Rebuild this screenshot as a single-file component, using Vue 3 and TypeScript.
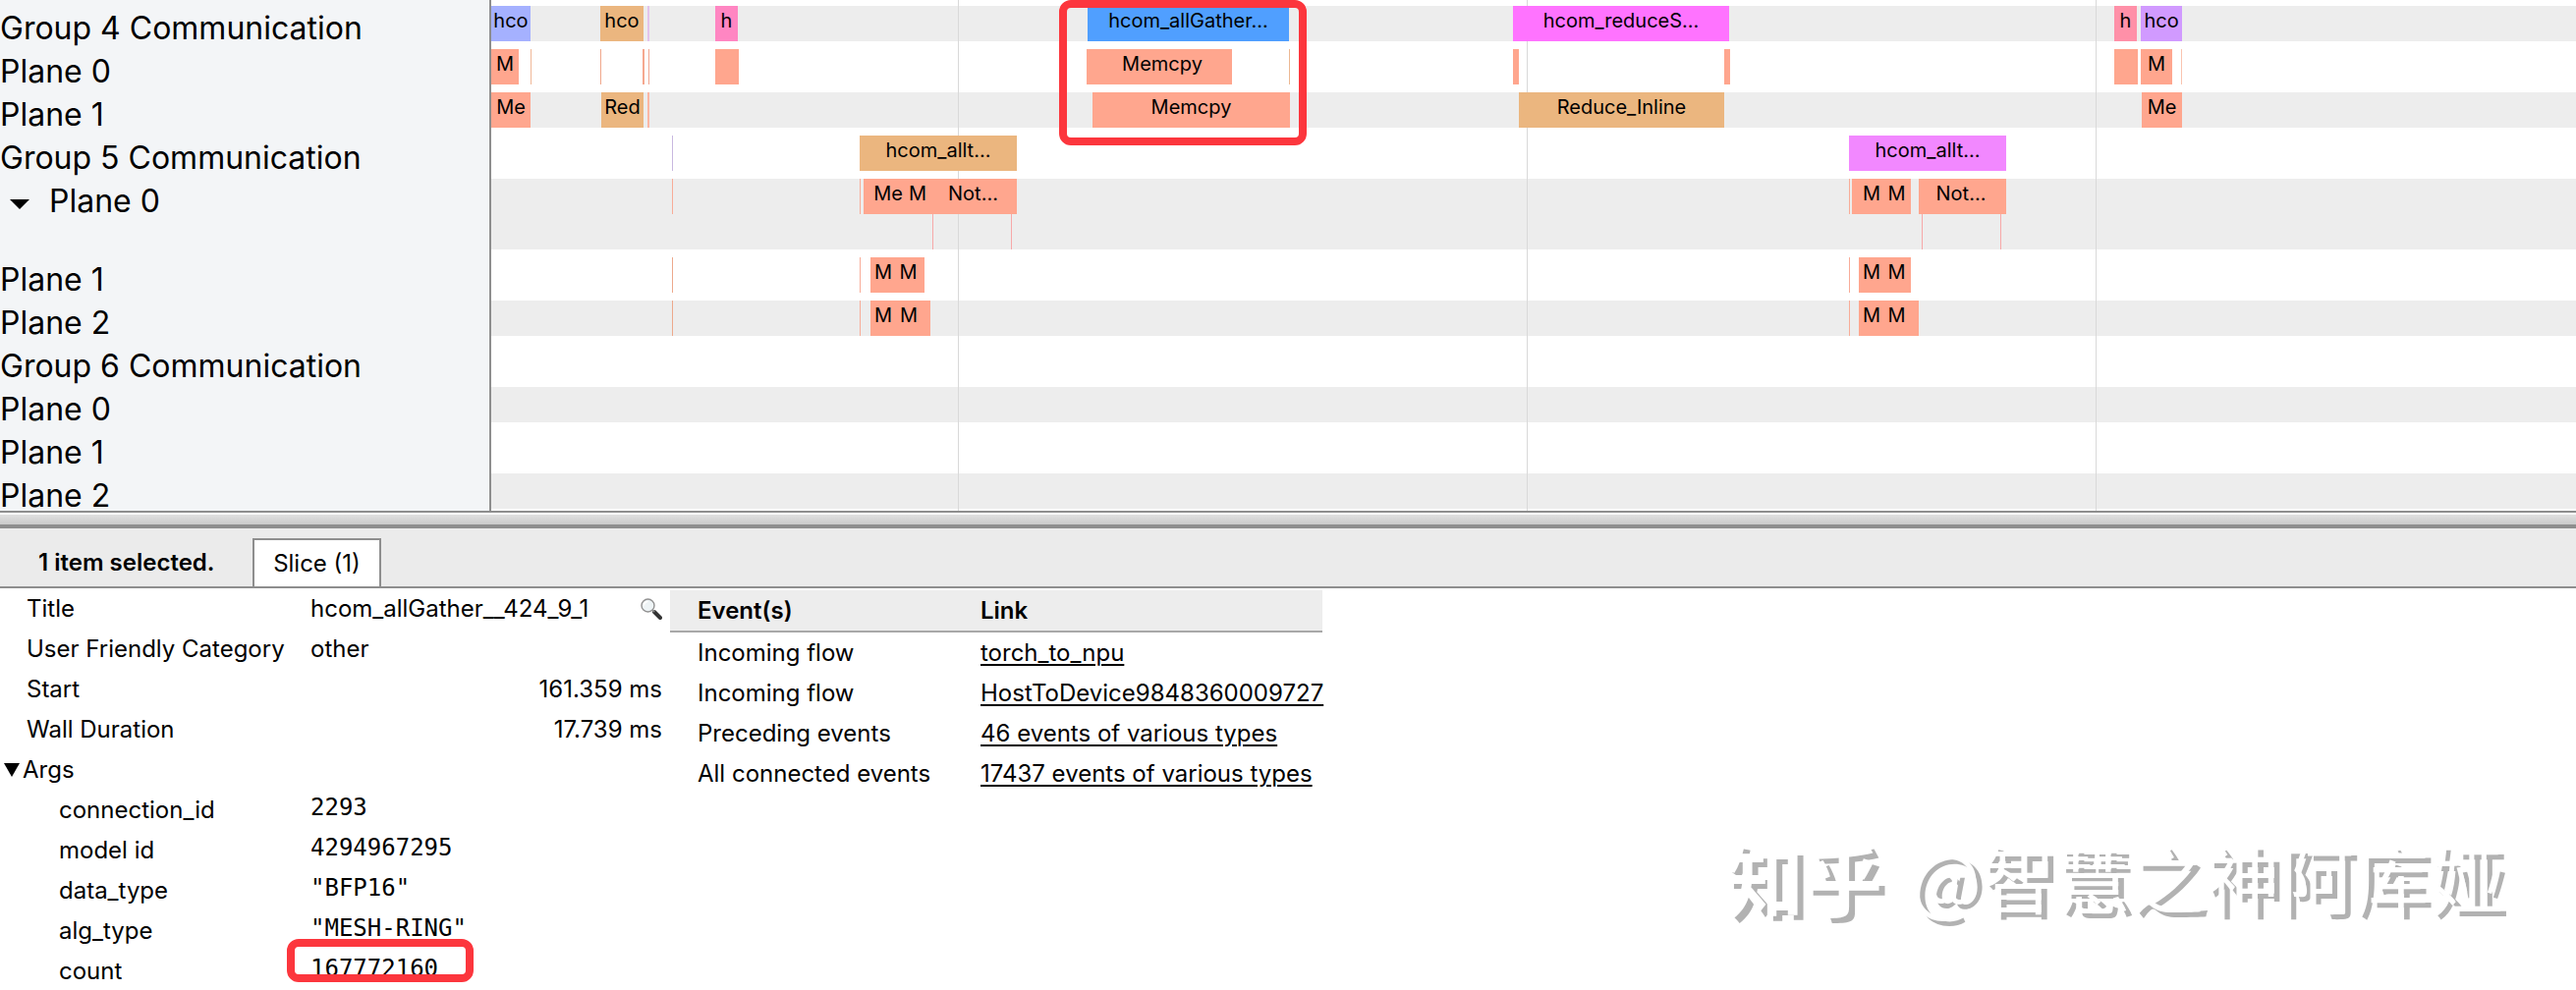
<script setup lang="ts">
interface Slice {
  from: number
  to: number
  color: string
  label?: string
  depth?: number
}

interface Track {
  name: string
  slices: Slice[]
  deep?: boolean
}

// Length of the visible time range, in timeline units.
const RANGE = 2122

const SALMON = '#ffa68e'
const TAN = '#ebb67f'
const FAINT = '#f8ac98'
const PINK = '#f7a8a8'

const s = (from: number, to: number, color: string, label = '', depth = 0): Slice => ({
  from,
  to,
  color,
  label,
  depth,
})

const tracks: Track[] = [
  {
    name: 'Group 4 Communication',
    slices: [
      s(0, 40, '#a5b1ff', 'hco'),
      s(111, 155, TAN, 'hco'),
      s(159, 161, '#e3c3ec'),
      s(228, 251, '#ff86c2', 'h'),
      s(607, 812, '#509fff', 'hcom_allGather...'),
      s(1040, 1260, '#ff73ff', 'hcom_reduceS...'),
      s(1652, 1675, '#ff90a8', 'h'),
      s(1679, 1721, '#d19aff', 'hco'),
    ],
  },
  {
    name: 'Plane 0',
    slices: [
      s(0, 28, SALMON, 'M'),
      s(40, 41, '#f0b898'),
      s(111, 112, '#f0a88c'),
      s(154, 156, '#f5a88f'),
      s(160, 161, '#f0a590'),
      s(228, 252, SALMON),
      s(606, 612, SALMON),
      s(612, 754, SALMON, 'Memcpy'),
      s(812, 813, '#ecb892'),
      s(1040, 1046, SALMON),
      s(1255, 1261, SALMON),
      s(1652, 1676, SALMON),
      s(1679, 1711, SALMON, 'M'),
      s(1720, 1721, '#fac4b0'),
    ],
  },
  {
    name: 'Plane 1',
    slices: [
      s(0, 40, SALMON, 'Me'),
      s(112, 155, TAN, 'Red'),
      s(159, 161, '#fbb6a4'),
      s(612, 813, SALMON, 'Memcpy'),
      s(1046, 1255, TAN, 'Reduce_Inline'),
      s(1680, 1721, SALMON, 'Me'),
    ],
  },
  {
    name: 'Group 5 Communication',
    slices: [
      s(184, 185, '#c8b8e0'),
      s(375, 535, TAN, 'hcom_allt...'),
      s(1382, 1542, '#f288ff', 'hcom_allt...'),
    ],
  },
  {
    name: 'Plane 0',
    deep: true,
    slices: [
      s(184, 185, FAINT),
      s(375, 376, FAINT),
      s(379, 386, SALMON),
      s(386, 422, SALMON, 'Me'),
      s(422, 446, SALMON, 'M'),
      s(446, 535, SALMON, 'Not...'),
      s(449, 450, PINK, '', 1),
      s(529, 530, PINK, '', 1),
      s(1382, 1383, FAINT),
      s(1385, 1392, SALMON),
      s(1392, 1418, SALMON, 'M'),
      s(1418, 1443, SALMON, 'M'),
      s(1443, 1445, SALMON),
      s(1453, 1456, SALMON),
      s(1456, 1536, SALMON, 'Not...'),
      s(1536, 1542, SALMON),
      s(1456, 1457, PINK, '', 1),
      s(1536, 1537, PINK, '', 1),
    ],
  },
  {
    name: 'Plane 1',
    slices: [
      s(184, 185, '#eda98c'),
      s(375, 376, FAINT),
      s(386, 412, SALMON, 'M'),
      s(412, 437, SALMON, 'M'),
      s(437, 441, SALMON),
      s(1382, 1383, FAINT),
      s(1392, 1418, SALMON, 'M'),
      s(1418, 1443, SALMON, 'M'),
      s(1443, 1445, SALMON),
    ],
  },
  {
    name: 'Plane 2',
    slices: [
      s(184, 185, '#eda98c'),
      s(375, 376, FAINT),
      s(386, 412, SALMON, 'M'),
      s(412, 438, SALMON, 'M'),
      s(438, 447, SALMON),
      s(1382, 1383, FAINT),
      s(1392, 1418, SALMON, 'M'),
      s(1418, 1443, SALMON, 'M'),
      s(1443, 1453, SALMON),
    ],
  },
  { name: 'Group 6 Communication', slices: [] },
  { name: 'Plane 0', slices: [] },
  { name: 'Plane 1', slices: [] },
  { name: 'Plane 2', slices: [] },
]

const gridLines = [475, 1054, 1633]

const pct = (value: number): string => `${(value / RANGE) * 100}%`

const sliceStyle = (slice: Slice) => ({
  left: pct(slice.from),
  width: pct(slice.to - slice.from),
  background: slice.color,
})

const args = [
  { key: 'connection_id', value: '2293' },
  { key: 'model id', value: '4294967295' },
  { key: 'data_type', value: '"BFP16"' },
  { key: 'alg_type', value: '"MESH-RING"' },
  { key: 'count', value: '167772160', marked: true },
]

const events = [
  { kind: 'Incoming flow', link: 'torch_to_npu' },
  { kind: 'Incoming flow', link: 'HostToDevice9848360009727' },
  { kind: 'Preceding events', link: '46 events of various types' },
  { kind: 'All connected events', link: '17437 events of various types' },
]
</script>

<template>
  <main class="viewer">
    <section class="timeline">
      <div class="headings">
        <div v-for="(track, i) in tracks" :key="i" class="heading" :class="{ deep: track.deep }">
          <button v-if="track.deep" class="toggle" type="button" aria-label="Collapse track">
            <svg width="20" height="10" viewBox="0 0 20 10"><path d="M0 0H20L10 10Z" /></svg>
          </button>
          <span>{{ track.name }}</span>
        </div>
      </div>
      <div class="lanes">
        <div
          v-for="(track, i) in tracks"
          :key="i"
          class="lane"
          :class="{ deep: track.deep, shaded: i % 2 === 0 }"
        ></div>
        <i v-for="x in gridLines" :key="x" class="grid-line" :style="{ left: pct(x) }"></i>
        <div class="slices">
          <div v-for="(track, i) in tracks" :key="i" class="slice-row" :class="{ deep: track.deep }">
            <div
              v-for="(slice, j) in track.slices"
              :key="j"
              class="slice"
              :class="{ nested: slice.depth === 1 }"
              :style="sliceStyle(slice)"
            >{{ slice.label }}</div>
          </div>
        </div>
        <div class="marker" :style="{ left: pct(578), width: pct(252) }"></div>
      </div>
    </section>

    <div class="drag-handle"></div>

    <section class="analysis">
      <header class="tabs">
        <strong class="summary">1 item selected.</strong>
        <button class="tab" type="button">Slice (1)</button>
      </header>
      <div class="details">
        <table class="properties">
          <tbody>
            <tr>
              <td>Title</td>
              <td>
                <div class="title-cell">
                  <span>hcom_allGather__424_9_1</span>
                  <button class="search" type="button" aria-label="Find">
                    <svg width="22" height="22" viewBox="0 0 22 22">
                      <path d="M14 14L20 20" stroke="#333" stroke-width="4" stroke-linecap="round" />
                      <path d="M11.6 11.6L14 14" stroke="#888" stroke-width="2" />
                      <circle cx="7.5" cy="7.5" r="6.5" fill="#eef4f6" stroke="#929292" stroke-width="1.4" />
                      <path d="M3.5 7.5a4 4 0 0 1 4-4" fill="none" stroke="#fff" stroke-width="1.6" />
                    </svg>
                  </button>
                </div>
              </td>
            </tr>
            <tr>
              <td>User Friendly Category</td>
              <td>other</td>
            </tr>
            <tr>
              <td>Start</td>
              <td class="number">161.359 ms</td>
            </tr>
            <tr>
              <td>Wall Duration</td>
              <td class="number">17.739 ms</td>
            </tr>
            <tr>
              <td class="args-title" colspan="2">
                <button class="args-toggle" type="button">
                  <svg width="16" height="14" viewBox="0 0 16 14"><path d="M0 0H16L8 14Z" /></svg>
                  <span>Args</span>
                </button>
              </td>
            </tr>
            <tr v-for="arg in args" :key="arg.key">
              <td class="arg-key">{{ arg.key }}</td>
              <td class="arg-value">
                <span>{{ arg.value }}</span>
                <div v-if="arg.marked" class="marker"></div>
              </td>
            </tr>
          </tbody>
        </table>
        <table class="events">
          <thead>
            <tr>
              <th>Event(s)</th>
              <th>Link</th>
            </tr>
          </thead>
          <tbody>
            <tr v-for="(event, i) in events" :key="i">
              <td>{{ event.kind }}</td>
              <td><a href="#">{{ event.link }}</a></td>
            </tr>
          </tbody>
        </table>
      </div>
      <div class="watermark"><b>知乎</b><span>@智慧之神阿库娅</span></div>
    </section>
  </main>
</template>

<style>
body {
  margin: 0;
  background: #fff;
}
</style>

<style scoped>
.viewer {
  display: flex;
  flex-direction: column;
  height: 100vh;
  overflow: hidden;
  color: #000;
  font-family: Inter, "Liberation Sans", sans-serif;
  font-size: 24px;
}

button {
  margin: 0;
  padding: 0;
  border: 0;
  background: none;
  color: inherit;
  font: inherit;
}

.timeline {
  display: flex;
  flex: none;
  border-bottom: 2px solid #8e8e8e;
}

.headings {
  box-sizing: border-box;
  flex: none;
  width: 500px;
  padding-top: 7px;
  border-right: 2px solid #8e8e8e;
  background: #f3f5f7;
  font-size: 32px;
  line-height: 44px;
}

.heading {
  display: flex;
  height: 44px;
  white-space: nowrap;
}

.heading.deep {
  height: 80px;
}

.heading:last-child {
  height: 37px;
}

.toggle {
  display: flex;
  align-items: center;
  width: 50px;
  height: 50px;
  padding-left: 10px;
}

.lanes {
  position: relative;
  flex: 1;
  padding-top: 6px;
  overflow: hidden;
}

.lane {
  height: 36px;
  margin-bottom: 8px;
}

.lane.shaded {
  background: #ededed;
}

.lane.deep {
  height: 72px;
}

.lane:nth-child(11) {
  margin-bottom: 2px;
}

.grid-line {
  position: absolute;
  top: 0;
  bottom: 0;
  width: 1px;
  background: #d9d9d9;
}

.slices {
  position: absolute;
  inset: 6px 0 0;
}

.slice-row {
  position: relative;
  height: 44px;
}

.slice-row.deep {
  height: 80px;
}

.slice {
  position: absolute;
  top: 0;
  height: 36px;
  font-size: 20px;
  line-height: 31px;
  text-align: center;
  white-space: nowrap;
}

.slice.nested {
  top: 36px;
}

.marker {
  position: absolute;
  box-sizing: border-box;
  border: 8px solid #fc363d;
  border-radius: 12px;
}

.lanes .marker {
  top: 0;
  height: 148px;
}

.drag-handle {
  flex: none;
  height: 10px;
  margin-top: 2px;
  border-bottom: 4px solid #8e8e8e;
  background: linear-gradient(#e0e0e0, #cacaca);
}

.analysis {
  position: relative;
  flex: 1;
}

.tabs {
  display: flex;
  align-items: flex-end;
  height: 59px;
  border-bottom: 2px solid #8e8e8e;
  background: #ebebeb;
  line-height: 48px;
}

.summary {
  width: 218px;
  padding-left: 39px;
  font-weight: 600;
  white-space: nowrap;
}

.tab {
  box-sizing: border-box;
  width: 131px;
  height: 49px;
  border: 2px solid #8e8e8e;
  border-bottom: 0;
  background: #fff;
}

.details {
  display: flex;
  align-items: flex-start;
}

table {
  border-collapse: collapse;
  table-layout: fixed;
}

td,
th {
  height: 41px;
  padding: 0;
  line-height: 41px;
  text-align: left;
  white-space: nowrap;
}

.properties {
  width: 674px;
  margin-right: 8px;
}

.properties td:first-child {
  width: 289px;
  padding-left: 27px;
}

.title-cell {
  display: flex;
  align-items: center;
  justify-content: space-between;
}

.search {
  display: flex;
}

.properties .number {
  text-align: right;
}

.properties .args-title:first-child {
  padding-left: 4px;
}

.args-toggle {
  display: flex;
  align-items: center;
  gap: 3px;
  height: 41px;
}

.properties .arg-key:first-child {
  padding-left: 60px;
}

.arg-value {
  position: relative;
  font-family: "DejaVu Sans Mono", monospace;
  line-height: 37px;
  vertical-align: top;
}

.arg-value .marker {
  top: -12px;
  left: -24px;
  width: 190px;
  height: 44px;
}

.events {
  width: 664px;
  margin-top: 2px;
}

.events thead tr {
  border-bottom: 2px solid #a8a8a8;
  background: #ededed;
}

.events th {
  font-weight: 600;
}

.events th:first-child,
.events td:first-child {
  width: 288px;
  padding-left: 28px;
}

.events a {
  color: inherit;
  text-decoration-thickness: 2px;
  text-underline-offset: 3px;
}

.watermark {
  position: absolute;
  right: 74px;
  bottom: 61px;
  display: flex;
  align-items: center;
  gap: 28px;
  color: #fff;
  font-family: "Noto Sans CJK SC", sans-serif;
  font-size: 76px;
  line-height: 112px;
  text-shadow: 6px 5px 0 #b2b2b2;
  white-space: nowrap;
}

.watermark b {
  font-size: 80px;
}
</style>
